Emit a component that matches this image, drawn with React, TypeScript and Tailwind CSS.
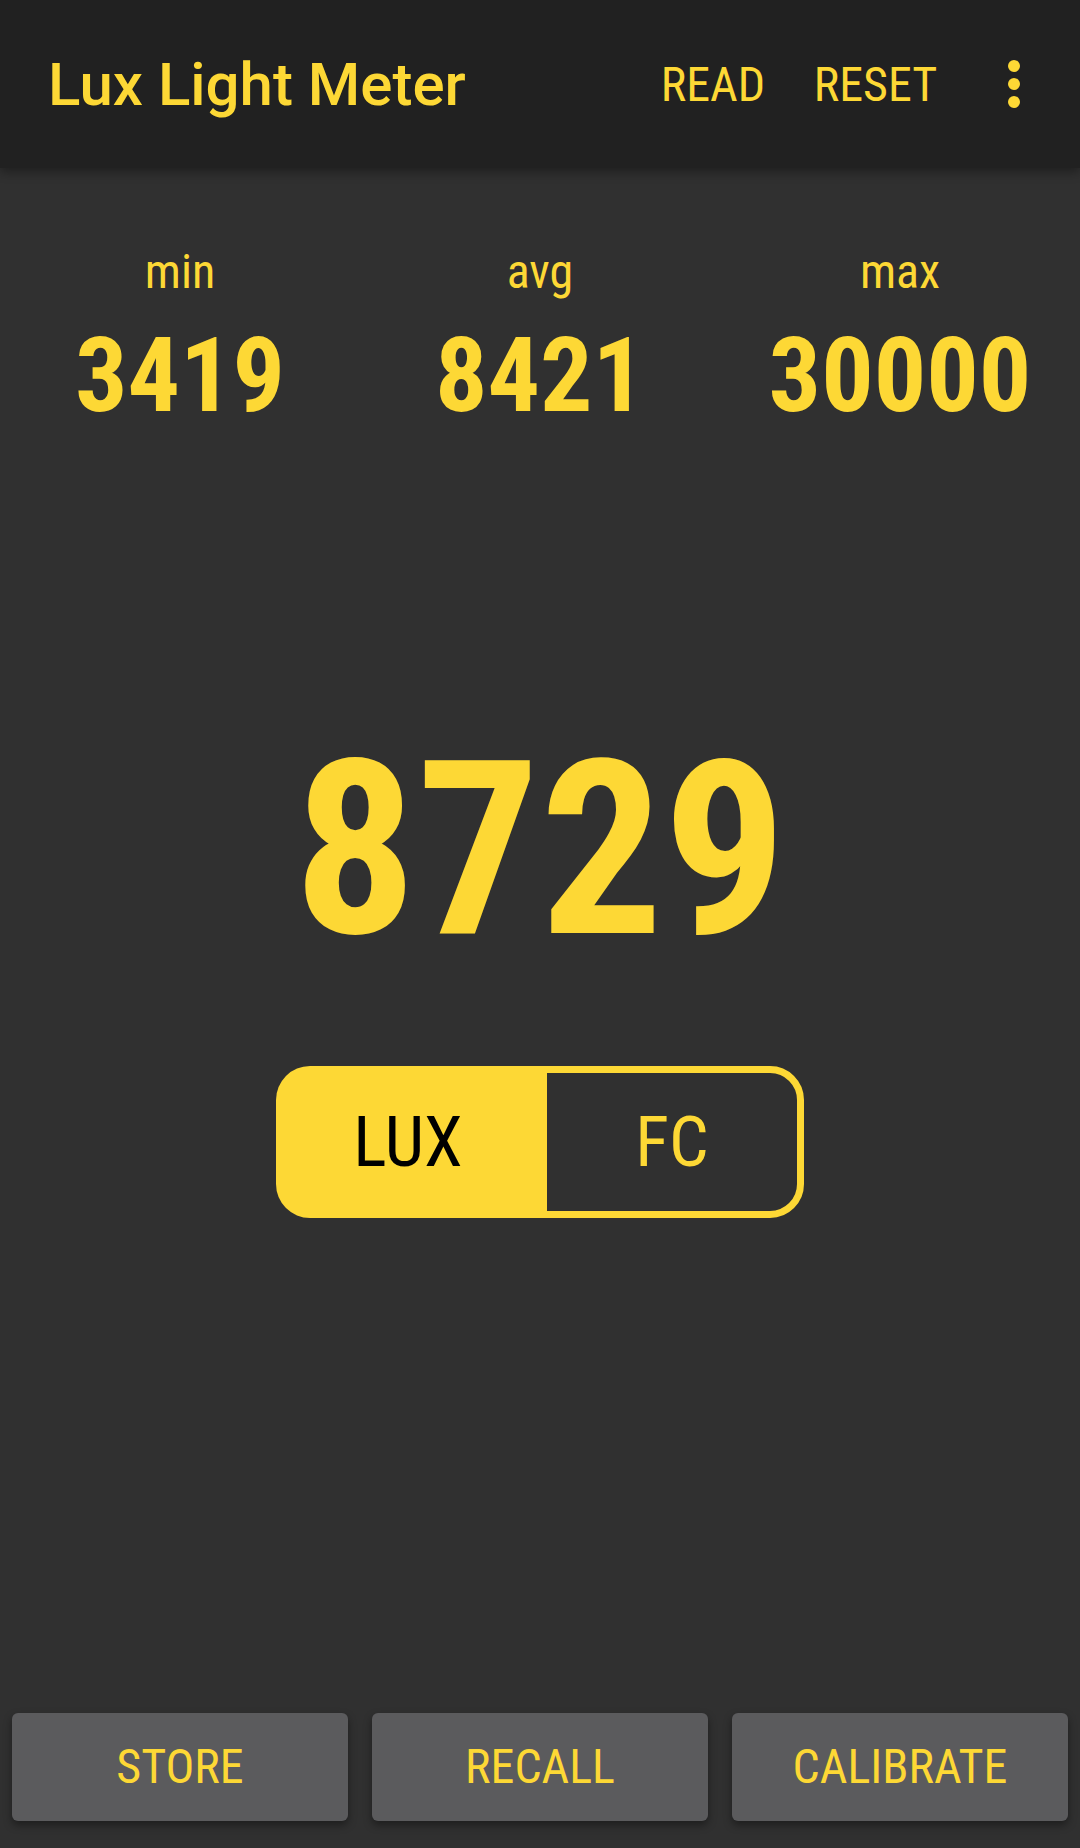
import React from 'react';

const cond = "font-['Roboto_Condensed','Roboto',sans-serif]";

const stats = [
  { label: 'min', value: '3419' },
  { label: 'avg', value: '8421' },
  { label: 'max', value: '30000' },
];

export default function App() {
  return (
    <div className="w-[1080px] h-[1848px] bg-[#303030] flex flex-col text-[#fdd835] overflow-hidden">
      {/* toolbar */}
      <div className="relative z-10 h-[168px] shrink-0 bg-[#212121] flex items-center pl-[48px] pr-[15px] shadow-[0_4px_10px_rgba(0,0,0,0.35)]">
        <h1 className="font-['Roboto',sans-serif] font-medium text-[60px] leading-none pt-[2px]">Lux Light Meter</h1>
        <div className="ml-auto flex items-center">
          <button className={`${cond} w-[150px] text-center text-[48px] leading-none pt-[2px]`}>READ</button>
          <button className={`${cond} w-[175px] text-center text-[48px] leading-none pt-[2px]`}>RESET</button>
          <div className="w-[102px] flex justify-center">
            <svg width="72" height="72" viewBox="0 0 24 24" fill="#fdd835">
              <circle cx="12" cy="6" r="2" />
              <circle cx="12" cy="12" r="2" />
              <circle cx="12" cy="18" r="2" />
            </svg>
          </div>
        </div>
      </div>

      {/* min / avg / max */}
      <div className="grid grid-cols-3 mt-[80px]">
        {stats.map(s => (
          <div key={s.label} className={`${cond} flex flex-col items-center`}>
            <span className="text-[48px] leading-none">{s.label}</span>
            <span className="mt-[28px] text-[104px] font-bold leading-none">{s.value}</span>
          </div>
        ))}
      </div>

      {/* current reading */}
      <div className={`${cond} mt-[300px] text-center text-[244px] font-bold leading-none`}>8729</div>

      {/* unit toggle */}
      <div className="mt-[94px] flex justify-center">
        <div className={`${cond} flex h-[152px] text-[70px] leading-none`}>
          <div className="w-[264px] bg-[#fdd835] text-black rounded-l-[34px] flex items-center justify-center">LUX</div>
          <div className="w-[264px] border-[7px] border-[#fdd835] rounded-r-[34px] flex items-center justify-center">FC</div>
        </div>
      </div>

      {/* bottom buttons */}
      <div className="mt-auto mb-[27px] px-[12px] grid grid-cols-3 gap-[24px]">
        {['STORE', 'RECALL', 'CALIBRATE'].map(b => (
          <button key={b} className={`${cond} h-[108px] rounded-[6px] bg-[#5b5b5d] text-[48px] leading-none shadow-[0_4px_8px_rgba(0,0,0,0.4)]`}>
            {b}
          </button>
        ))}
      </div>
    </div>
  );
}
